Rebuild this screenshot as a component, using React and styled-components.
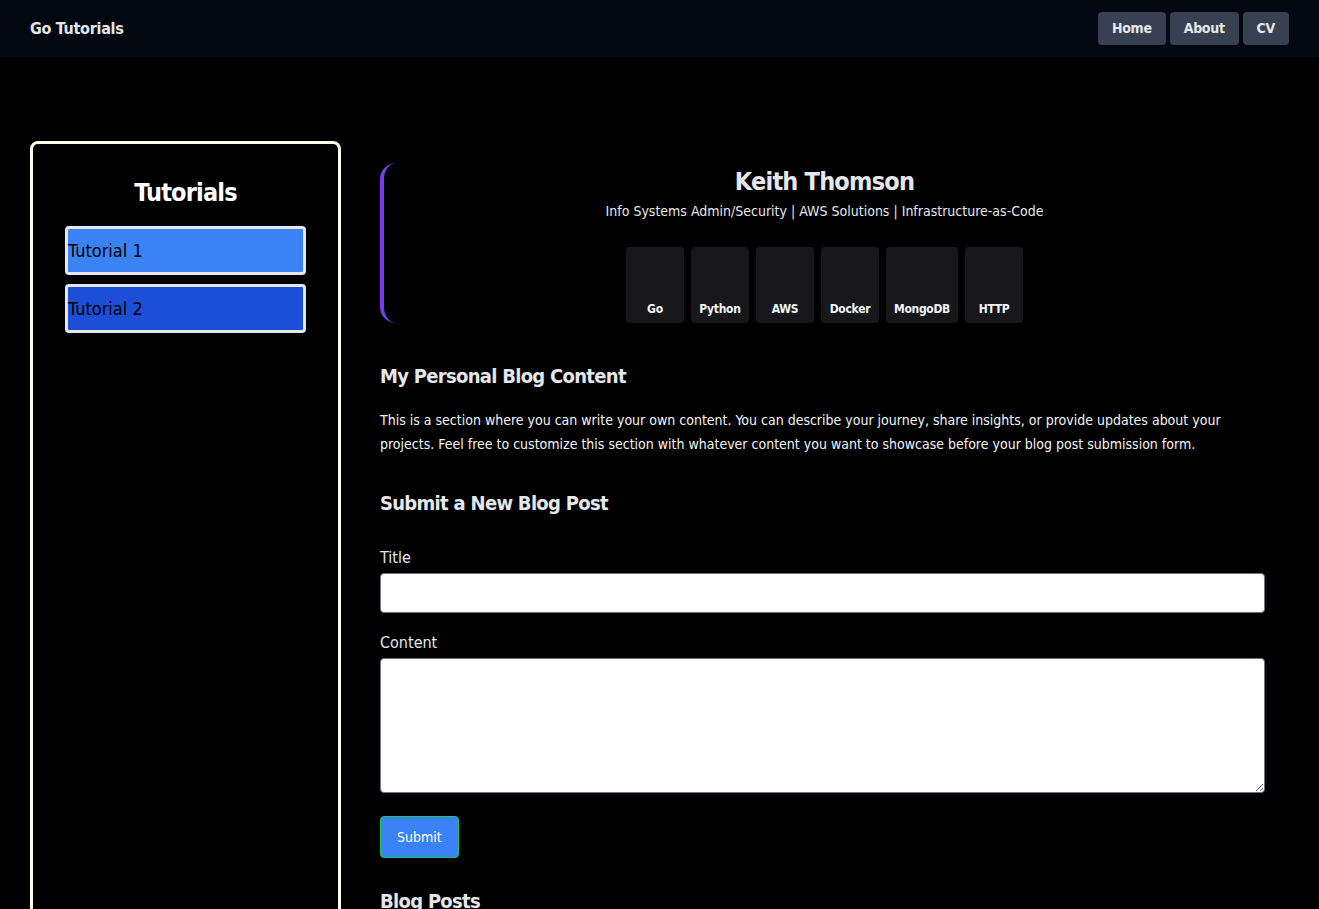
import React from 'react';
import styled, { createGlobalStyle } from 'styled-components';

const GlobalStyle = createGlobalStyle`
  html, body {
    margin: 0;
    padding: 0;
    background: #000;
    color: #f3f4f6;
    font-family: "DejaVu Sans Condensed", "DejaVu Sans", sans-serif;
    font-stretch: condensed;
  }
  * { box-sizing: border-box; }
`

const Header = styled.header`
  height: 57px;
  background: #030712;
  display: flex;
  align-items: center;
  justify-content: space-between;
  padding: 0 30px;
`
const Brand = styled.div`
  font-size: 16px;
  font-weight: bold;
  letter-spacing: -0.3px;
  color: #e5e7eb;
`
const Nav = styled.nav`
  display: flex;
  gap: 4px;
  margin-top: -1px;
`
const NavButton = styled.a`
  background: #374151;
  color: #e5e7eb;
  border-radius: 4px;
  height: 33px;
  padding: 0 14px;
  display: flex;
  align-items: center;
  font-size: 14px;
  font-weight: bold;
  letter-spacing: -0.3px;
`
const Layout = styled.div`
  display: flex;
  padding: 84px 54px 0 30px;
  gap: 39px;
`
const Sidebar = styled.aside`
  width: 311px;
  flex-shrink: 0;
  min-height: 900px;
  border: 3px solid #fffbeb;
  border-radius: 8px;
  padding: 32px 32px;
  display: flex;
  flex-direction: column;
  align-items: center;
`
const SideTitle = styled.h2`
  margin: 2px 0 19px;
  font-size: 25px;
  font-weight: bold;
  letter-spacing: -0.8px;
  color: #fff;
`
const TutorialList = styled.div`
  width: 100%;
  display: flex;
  flex-direction: column;
  gap: 9px;
`
const TutorialButton = styled.div`
  height: 49px;
  border: 3px solid #e5e7eb;
  border-radius: 4px;
  background: ${p => p.$dark ? '#1d4ed8' : '#3b82f6'};
  color: #000;
  font-size: 18px;
  display: flex;
  align-items: center;
`
const Main = styled.main`
  flex: 1;
  padding-top: 22px;
`
const Hero = styled.section`
  border-left: 4px solid #7c3aed;
  border-radius: 16px 0 0 16px;
  height: 160px;
  display: flex;
  flex-direction: column;
  align-items: center;
`
const Name = styled.h1`
  margin: 4px 0 0;
  font-size: 25px;
  font-weight: bold;
  letter-spacing: -0.8px;
  color: #e5e7eb;
`
const Subtitle = styled.p`
  margin: 7px 0 0;
  font-size: 14px;
  color: #e5e7eb;
`
const Tiles = styled.div`
  display: flex;
  gap: 7px;
  margin-top: 28px;
`
const Tile = styled.div`
  height: 76px;
  min-width: 58px;
  padding: 0 8px 7px;
  background: #18181b;
  border-radius: 4px;
  display: flex;
  align-items: flex-end;
  justify-content: center;
  font-size: 12px;
  font-weight: bold;
  letter-spacing: -0.3px;
  color: #f3f4f6;
`
const SectionTitle = styled.h2`
  margin: ${p => p.$top || '40px'} 0 0;
  font-size: 20px;
  font-weight: bold;
  letter-spacing: -0.7px;
  color: #e5e7eb;
`
const Paragraph = styled.p`
  margin: 20px 0 0;
  font-size: 14px;
  line-height: 24px;
  color: #f3f4f6;
  max-width: 860px;
`
const Form = styled.form`
  margin-top: 33px;
  display: flex;
  flex-direction: column;
`
const Label = styled.label`
  font-size: 16px;
  color: #e5e7eb;
  margin-bottom: 6px;
`
const Input = styled.input`
  height: 40px;
  border: 1px solid #6b7280;
  border-radius: 4px;
  background: #fff;
  margin-bottom: 20px;
`
const TextArea = styled.textarea`
  height: 135px;
  border: 1px solid #6b7280;
  border-radius: 4px;
  background: #fff;
`
const SubmitButton = styled.button`
  align-self: flex-start;
  margin-top: 23px;
  height: 42px;
  padding: 0 16px;
  background: #3b82f6;
  border: 1px solid #22c55e;
  border-radius: 4px;
  color: #fff;
  font-family: inherit;
  font-size: 14px;
`

const skills = ['Go', 'Python', 'AWS', 'Docker', 'MongoDB', 'HTTP']

export default function App() {
  return (
    <>
      <GlobalStyle />
      <Header>
        <Brand>Go Tutorials</Brand>
        <Nav>
          <NavButton>Home</NavButton>
          <NavButton>About</NavButton>
          <NavButton>CV</NavButton>
        </Nav>
      </Header>
      <Layout>
        <Sidebar>
          <SideTitle>Tutorials</SideTitle>
          <TutorialList>
            <TutorialButton>Tutorial 1</TutorialButton>
            <TutorialButton $dark>Tutorial 2</TutorialButton>
          </TutorialList>
        </Sidebar>
        <Main>
          <Hero>
            <Name>Keith Thomson</Name>
            <Subtitle>Info Systems Admin/Security | AWS Solutions | Infrastructure-as-Code</Subtitle>
            <Tiles>
              {skills.map(s => <Tile key={s}>{s}</Tile>)}
            </Tiles>
          </Hero>
          <SectionTitle $top="41px">My Personal Blog Content</SectionTitle>
          <Paragraph>
            This is a section where you can write your own content. You can describe your journey, share insights, or provide updates about your projects. Feel free to customize this section with whatever content you want to showcase before your blog post submission form.
          </Paragraph>
          <SectionTitle $top="35px">Submit a New Blog Post</SectionTitle>
          <Form>
            <Label>Title</Label>
            <Input />
            <Label>Content</Label>
            <TextArea />
            <SubmitButton type="button">Submit</SubmitButton>
          </Form>
          <SectionTitle $top="31px">Blog Posts</SectionTitle>
        </Main>
      </Layout>
    </>
  )
}
